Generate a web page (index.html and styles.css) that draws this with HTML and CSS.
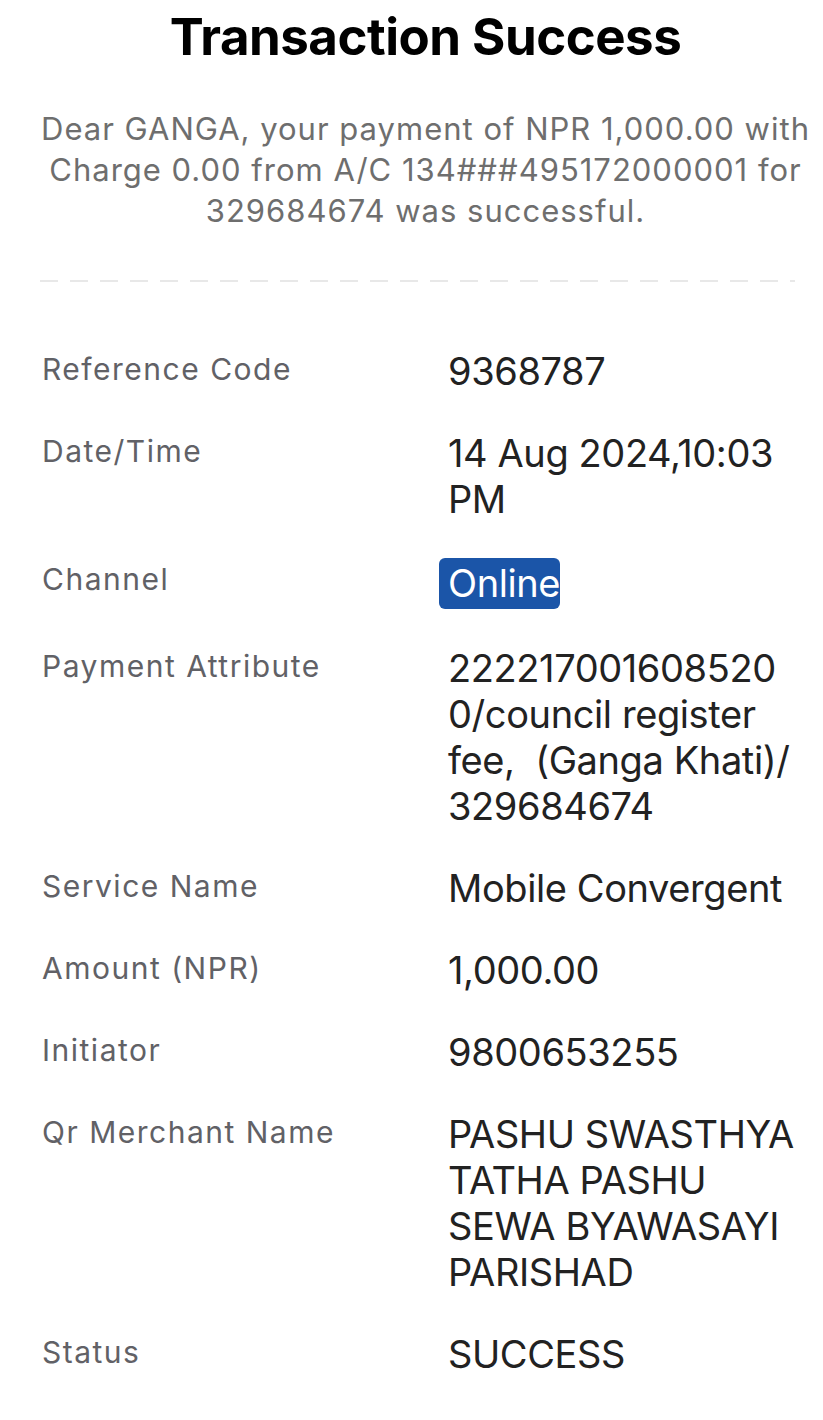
FILE: index.html
```html
<!doctype html>
<html lang="en">
  <head>
    <meta charset="utf-8">
    <title>Transaction Success</title>
    <link rel="stylesheet" href="styles.css">
  </head>
  <body>
    <div id="receipt">
      <h1 class="heading">Transaction Success</h1>
      <p class="message">
        Dear GANGA, your payment of NPR 1,000.00 with Charge 0.00 from A/C 134###495172000001 for 329684674 was successful.
      </p>
      <div class="divider"></div>

      <div class="details">
        <div class="row">
          <div class="label">Reference Code</div>
          <div class="value">9368787</div>
        </div>
        <div class="row">
          <div class="label">Date/Time</div>
          <div class="value">14 Aug 2024,10:03 PM</div>
        </div>
        <div class="row">
          <div class="label">Channel</div>
          <div class="value"><span class="selected">Online</span></div>
        </div>
        <div class="row">
          <div class="label">Payment Attribute</div>
          <div class="value">222217001608520<wbr>0/council register fee,&nbsp; (Ganga Khati)/<wbr>329684674</div>
        </div>
        <div class="row">
          <div class="label">Service Name</div>
          <div class="value">Mobile Convergent</div>
        </div>
        <div class="row">
          <div class="label">Amount (NPR)</div>
          <div class="value">1,000.00</div>
        </div>
        <div class="row">
          <div class="label">Initiator</div>
          <div class="value">9800653255</div>
        </div>
        <div class="row">
          <div class="label">Qr Merchant Name</div>
          <div class="value">PASHU SWASTHYA TATHA PASHU SEWA BYAWASAYI PARISHAD</div>
        </div>
        <div class="row">
          <div class="label">Status</div>
          <div class="value">SUCCESS</div>
        </div>
      </div>
    </div>
  </body>
</html>
```

FILE: styles.css
```css
body,
html {
  margin: 0;
  background-color: #fff;
  font-family: Inter, "Noto Sans", sans-serif;
}

#receipt {
  padding-top: 7px;
}

.heading {
  margin: 0;
  padding-left: 28px;
  font-size: 51px;
  line-height: 60px;
  font-weight: 700;
  letter-spacing: -0.5px;
  text-align: center;
  color: #000;
}

.message {
  margin: 41px 0 0;
  padding: 0 2px 0 30px;
  font-size: 31px;
  line-height: 41px;
  letter-spacing: 1px;
  text-align: center;
  color: #6e6e6e;
}

.divider {
  height: 2px;
  margin: 49px 28px 0 40px;
  background-image: linear-gradient(to right, #e8e8e8 18px, transparent 18px);
  background-size: 30px 2px;
}

.details {
  margin-top: 66px;
  padding: 0 16px 0 42px;
}

.row {
  display: flex;
  align-items: flex-start;
  margin-bottom: 36px;
}

.label {
  width: 406px;
  flex-shrink: 0;
  padding-top: 1px;
  font-size: 30px;
  line-height: 40px;
  letter-spacing: 1.5px;
  color: #616166;
}

.value {
  flex-grow: 1;
  font-size: 38px;
  line-height: 46px;
  letter-spacing: -0.4px;
  color: #222;
  overflow-wrap: break-word;
}

.selected {
  display: inline-block;
  margin-left: -9px;
  padding: 2px 0 3px 9px;
  line-height: 46px;
  border-radius: 6px;
  background-color: #1b55a8;
  color: #fff;
}
```
